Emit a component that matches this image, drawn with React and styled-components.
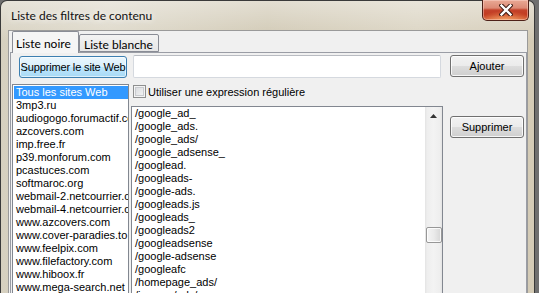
import styled, { createGlobalStyle } from 'styled-components';

const GlobalStyle = createGlobalStyle`
  html, body { margin: 0; padding: 0; }
  body { background: #6f6f6f; overflow: hidden; }
`;

const Screen = styled.div`
  width: 539px;
  height: 293px;
  overflow: hidden;
  background: #6f6f6f;
`;

const Window = styled.div`
  width: 533px;
  height: 330px;
  border: 1px solid #3a3a3a;
  border-bottom: none;
  border-radius: 7px 7px 0 0;
  display: flex;
  flex-direction: column;
  background:
    linear-gradient(180deg, rgba(255,255,255,0.4), rgba(255,255,255,0) 40px),
    linear-gradient(90deg, #d6d0bf 0%, #ddd8c9 20%, #d0c8b3 50%, #dad3c1 78%, #d4cbb6 100%);
`;

const TitleBar = styled.div`
  height: 29px;
  display: flex;
  align-items: flex-start;
  padding-left: 10px;
`;

const Title = styled.div`
  margin-top: 7px;
  font-family: Lato, "Noto Sans", sans-serif;
  font-size: 12px;
  color: #111;
  text-shadow: 0 0 6px rgba(255,255,255,0.9), 0 0 10px rgba(255,255,255,0.7);
`;

const CloseButton = styled.div`
  margin-left: auto;
  margin-right: 5px;
  margin-top: -1px;
  width: 45px;
  height: 20px;
  border: 1px solid #4e2118;
  border-top: none;
  border-radius: 0 0 5px 5px;
  display: flex;
  align-items: center;
  justify-content: center;
  background:
    radial-gradient(ellipse 60% 45% at 50% 100%, rgba(255,190,120,0.7), rgba(255,190,120,0) 100%),
    linear-gradient(180deg, #e9a995 0%, #dc8a75 40%, #c4432b 50%, #c23a20 75%, #d45a34 100%);
  box-shadow: inset 0 0 0 1px rgba(255,220,210,0.45);
`;

const Body = styled.div`
  flex: 1;
  display: flex;
  padding: 0 6px 0 7px;
`;

const Client = styled.div`
  flex: 1;
  display: flex;
  flex-direction: column;
  background: #f0f0f0;
  border: 1px solid #9a9a9a;
  border-bottom: none;
  padding-left: 1px;
`;

const TabStrip = styled.div`
  display: flex;
  align-items: flex-end;
  height: 21px;
  padding-left: 2px;
`;

const Tab = styled.div`
  box-sizing: border-box;
  position: relative;
  z-index: ${p => (p.$active ? 2 : 1)};
  width: ${p => p.$width}px;
  height: ${p => (p.$active ? 22 : 18)}px;
  margin-bottom: ${p => (p.$active ? -1 : 0)}px;
  border: 1px solid #898c95;
  border-bottom: ${p => (p.$active ? 'none' : '1px solid #898c95')};
  border-radius: 2px 2px 0 0;
  background: ${p => (p.$active ? '#f5f5f5' : 'linear-gradient(180deg, #f3f3f3, #e6e6e6)')};
  padding: ${p => (p.$active ? '4px 0 0 3px' : '2px 0 0 4px')};
  font-family: Lato, "Noto Sans", sans-serif;
  font-size: 12px;
  color: #000;
  white-space: nowrap;
`;

const Panel = styled.div`
  flex: 1;
  display: flex;
  flex-direction: column;
  border: 1px solid #9a9da5;
  border-bottom: none;
  background: #f0f0f0;
  font-family: "Liberation Sans", Arial, sans-serif;
  font-size: 11px;
  color: #000;
`;

const TopRow = styled.div`
  display: flex;
  align-items: flex-start;
  padding: 2px 0 0 8px;
`;

const Button = styled.div`
  box-sizing: border-box;
  width: ${p => p.$width}px;
  height: 22px;
  margin-top: ${p => p.$top || 0}px;
  margin-left: ${p => p.$left || 0}px;
  border: 1px solid ${p => (p.$focus ? '#3c7fb1' : '#707070')};
  border-radius: 3px;
  display: flex;
  align-items: center;
  justify-content: center;
  white-space: nowrap;
  letter-spacing: ${p => (p.$focus ? '-0.15px' : '0')};
  box-shadow: inset 0 0 0 1px ${p => (p.$focus ? 'rgba(255,255,255,0.6)' : 'rgba(255,255,255,0.8)')};
  background: ${p =>
    p.$focus
      ? 'linear-gradient(180deg, #eaf6fd 0%, #d9f0fc 50%, #bee6fd 50%, #a7d9f5 100%)'
      : 'linear-gradient(180deg, #f2f2f2 0%, #ebebeb 50%, #dddddd 50%, #cfcfcf 100%)'};
`;

const TextInput = styled.div`
  box-sizing: border-box;
  width: 308px;
  height: 23px;
  margin-left: 6px;
  background: #fff;
  border: 1px solid #d5d9df;
  border-top-color: #b9bcc2;
  border-radius: 2px;
`;

const BottomRow = styled.div`
  display: flex;
  align-items: flex-start;
  margin-top: 6px;
  padding-left: 1px;
`;

const SiteList = styled.div`
  box-sizing: border-box;
  width: 117px;
  height: 230px;
  background: #fff;
  border: 1px solid #828790;
  padding: 1px 0 0 1px;
  overflow: hidden;
`;

const SiteItem = styled.div`
  height: 13px;
  line-height: 13px;
  padding-left: 2px;
  white-space: nowrap;
  overflow: hidden;
  background: ${p => (p.$selected ? '#3399ff' : 'transparent')};
  color: ${p => (p.$selected ? '#fff' : '#000')};
`;

const Middle = styled.div`
  width: 312px;
  margin-left: 2px;
  display: flex;
  flex-direction: column;
`;

const CheckRow = styled.div`
  display: flex;
  align-items: center;
  height: 13px;
  margin-top: 1px;
  padding-left: 2px;
  gap: 2px;
`;

const CheckBox = styled.div`
  box-sizing: border-box;
  width: 13px;
  height: 13px;
  border: 1px solid #8e8f8f;
  background: linear-gradient(135deg, #d6d8db, #f7f7f7);
  box-shadow: inset 0 0 0 1px #f4f4f4, inset 0 0 0 2px #c9cbcf;
`;

const PatternList = styled.div`
  box-sizing: border-box;
  margin-top: 8px;
  height: 200px;
  display: flex;
  background: #fff;
  border: 1px solid #828790;
  border-bottom: none;
  overflow: hidden;
`;

const PatternItems = styled.div`
  flex: 1;
  padding-left: 3px;
`;

const PatternItem = styled.div`
  height: 13px;
  line-height: 13px;
  white-space: nowrap;
`;

const ScrollBar = styled.div`
  width: 17px;
  display: flex;
  flex-direction: column;
  align-items: center;
  background: linear-gradient(90deg, #e3e3e3 0, #eeeeee 2px, #f3f3f3 50%, #eeeeee 15px, #e3e3e3 17px);
`;

const ArrowUp = styled.div`
  height: 17px;
  display: flex;
  align-items: center;
  justify-content: center;
`;

const Thumb = styled.div`
  box-sizing: border-box;
  width: 16px;
  height: 16px;
  margin-top: 103px;
  border: 1px solid #979797;
  border-radius: 2px;
  background: linear-gradient(90deg, #f4f4f4 0%, #eaeaea 50%, #d6d6d6 100%);
  box-shadow: inset 0 0 0 1px rgba(255,255,255,0.8);
`;

const ButtonColumn = styled.div`
  margin-left: 7px;
  display: flex;
  flex-direction: column;
`;

const sites = [
  'Tous les sites Web',
  '3mp3.ru',
  'audiogogo.forumactif.com',
  'azcovers.com',
  'imp.free.fr',
  'p39.monforum.com',
  'pcastuces.com',
  'softmaroc.org',
  'webmail-2.netcourrier.com',
  'webmail-4.netcourrier.com',
  'www.azcovers.com',
  'www.cover-paradies.to',
  'www.feelpix.com',
  'www.filefactory.com',
  'www.hiboox.fr',
  'www.mega-search.net',
  'www.megaupload.com',
];

const patterns = [
  '/google_ad_',
  '/google_ads.',
  '/google_ads/',
  '/google_adsense_',
  '/googlead.',
  '/googleads-',
  '/google-ads.',
  '/googleads.js',
  '/googleads_',
  '/googleads2',
  '/googleadsense',
  '/google-adsense',
  '/googleafc',
  '/homepage_ads/',
  '/images/ads/',
];

function App() {
  return (
    <Screen>
      <GlobalStyle />
      <Window>
        <TitleBar>
          <Title>Liste des filtres de contenu</Title>
          <CloseButton>
            <svg width="14" height="12" viewBox="0 0 14 12">
              <path d="M2.5 1.5 L11.5 10.5 M11.5 1.5 L2.5 10.5" stroke="#3d1a12" strokeWidth="4.4" strokeLinecap="square" />
              <path d="M2.5 1.5 L11.5 10.5 M11.5 1.5 L2.5 10.5" stroke="#ffffff" strokeWidth="2.4" strokeLinecap="square" />
            </svg>
          </CloseButton>
        </TitleBar>
        <Body>
          <Client>
            <TabStrip>
              <Tab $active $width={67}>Liste noire</Tab>
              <Tab $width={80}>Liste blanche</Tab>
            </TabStrip>
            <Panel>
              <TopRow>
                <Button $focus $width={108} $top={1}>Supprimer le site Web</Button>
                <TextInput />
                <Button $width={74} $left={9}>Ajouter</Button>
              </TopRow>
              <BottomRow>
                <SiteList>
                  {sites.map((s, i) => (
                    <SiteItem key={s} $selected={i === 0}>{s}</SiteItem>
                  ))}
                </SiteList>
                <Middle>
                  <CheckRow>
                    <CheckBox />
                    <span>Utiliser une expression régulière</span>
                  </CheckRow>
                  <PatternList>
                    <PatternItems>
                      {patterns.map(p => (
                        <PatternItem key={p}>{p}</PatternItem>
                      ))}
                    </PatternItems>
                    <ScrollBar>
                      <ArrowUp>
                        <svg width="7" height="4" viewBox="0 0 7 4">
                          <path d="M0 4 L3.5 0 L7 4 Z" fill="#333" />
                        </svg>
                      </ArrowUp>
                      <Thumb />
                    </ScrollBar>
                  </PatternList>
                </Middle>
                <ButtonColumn>
                  <Button $width={74} $top={32}>Supprimer</Button>
                </ButtonColumn>
              </BottomRow>
            </Panel>
          </Client>
        </Body>
      </Window>
    </Screen>
  );
}

export default App;
